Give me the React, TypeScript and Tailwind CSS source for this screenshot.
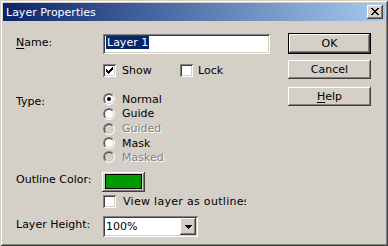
const raised =
  "shadow-[inset_-1px_-1px_#404040,inset_1px_1px_#ffffff,inset_-2px_-2px_#808080,inset_2px_2px_#d4d0c8]";
const sunken =
  "shadow-[inset_1px_1px_#808080,inset_-1px_-1px_#ffffff,inset_2px_2px_#404040,inset_-2px_-2px_#d4d0c8]";

function Checkbox({ checked = false }: { checked?: boolean }) {
  return (
    <span className={`flex h-[13px] w-[13px] shrink-0 items-center justify-center bg-white ${sunken}`}>
      {checked && (
        <svg width="7" height="7" viewBox="0 0 7 7" shapeRendering="crispEdges">
          {[2, 3, 4, 3, 2, 1, 0].map((y, x) => (
            <rect key={x} x={x} y={y} width="1" height="3" fill="#000" />
          ))}
        </svg>
      )}
    </span>
  );
}

function Radio({ checked = false, disabled = false }: { checked?: boolean; disabled?: boolean }) {
  return (
    <span className="flex h-[12px] w-[12px] shrink-0 rounded-full border border-t-[#808080] border-l-[#808080] border-r-white border-b-white">
      <span
        className={`flex flex-1 items-center justify-center rounded-full border border-t-[#404040] border-l-[#404040] border-r-[#d4d0c8] border-b-[#d4d0c8] ${
          disabled ? "bg-[#d4d0c8]" : "bg-white"
        }`}
      >
        {checked && <span className="h-[4px] w-[4px] rounded-full bg-black" />}
      </span>
    </span>
  );
}

function RadioRow({
  label,
  h,
  checked,
  disabled,
}: {
  label: string;
  h: string;
  checked?: boolean;
  disabled?: boolean;
}) {
  return (
    <div className={`flex items-center ${h}`}>
      <Radio checked={checked} disabled={disabled} />
      <span
        className={`ml-[7px] ${
          disabled ? "text-[#808080] [text-shadow:1px_1px_0_#ffffff]" : ""
        }`}
      >
        {label}
      </span>
    </div>
  );
}

function Button({ children, className = "" }: { children: React.ReactNode; className?: string }) {
  return (
    <div className={`flex h-[19px] w-[83px] items-center justify-center bg-[#d4d0c8] ${raised} ${className}`}>
      {children}
    </div>
  );
}

export default function App() {
  return (
    <div className="flex h-[246px] w-[388px] flex-col bg-[#d4d0c8] p-[3px] font-['DejaVu_Sans',sans-serif] text-[11px] leading-[13px] text-black shadow-[inset_1px_1px_#d4d0c8,inset_-1px_-1px_#404040,inset_2px_2px_#ffffff,inset_-2px_-2px_#808080]">
      {/* title bar */}
      <div className="flex h-[18px] shrink-0 items-center justify-between bg-[linear-gradient(to_right,#0a246a,#a6caf0)] pl-[3px] pr-[2px]">
        <span className="text-white">Layer Properties</span>
        <div className={`flex h-[14px] w-[16px] items-center justify-center bg-[#d4d0c8] ${raised}`}>
          <svg width="8" height="7" viewBox="0 0 8 7" shapeRendering="crispEdges" className="-mt-[1px] -ml-[1px]">
            <rect x="0" y="0" width="2" height="1" />
            <rect x="6" y="0" width="2" height="1" />
            <rect x="1" y="1" width="2" height="1" />
            <rect x="5" y="1" width="2" height="1" />
            <rect x="2" y="2" width="4" height="1" />
            <rect x="3" y="3" width="2" height="1" />
            <rect x="2" y="4" width="4" height="1" />
            <rect x="1" y="5" width="2" height="1" />
            <rect x="5" y="5" width="2" height="1" />
            <rect x="0" y="6" width="2" height="1" />
            <rect x="6" y="6" width="2" height="1" />
          </svg>
        </div>
      </div>

      <div className="flex flex-1 pl-[13px] pr-[14px] pt-[12px]">
        {/* fields */}
        <div className="flex flex-1 flex-col pt-[1px]">
          <div className="flex h-[20px]">
            <div className="w-[87px] pt-[2px]">
              <span className="underline underline-offset-2">N</span>ame:
            </div>
            <div className={`h-[20px] w-[167px] bg-white pl-[3px] pt-[2px] ${sunken}`}>
              <span className="inline-block bg-[#0a246a] px-[1px] text-white">Layer 1</span>
            </div>
          </div>

          <div className="mt-[10px] flex h-[13px] items-center pl-[87px]">
            <Checkbox checked />
            <span className="ml-[6px] w-[58px]">Show</span>
            <Checkbox />
            <span className="ml-[5px]">Lock</span>
          </div>

          <div className="mt-[15px] flex">
            <div className="w-[87px] pt-[3px]">Type:</div>
            <div className="flex flex-col">
              <RadioRow label="Normal" h="h-[14px]" checked />
              <RadioRow label="Guide" h="h-[15px]" />
              <RadioRow label="Guided" h="h-[15px]" disabled />
              <RadioRow label="Mask" h="h-[14px]" />
              <RadioRow label="Masked" h="h-[14px]" disabled />
            </div>
          </div>

          <div className="mt-[8px] flex">
            <div className="w-[86px] pt-[1px]">Outline Color:</div>
            <div className={`h-[20px] w-[43px] bg-[#d4d0c8] pl-[3px] pr-[3px] pt-[2px] pb-[3px] ${raised}`}>
              <div className="h-full w-full border border-black bg-[#009900]" />
            </div>
          </div>

          <div className="mt-[3px] flex h-[13px] items-center pl-[87px]">
            <Checkbox />
            <span className="ml-[7px] w-[123px] overflow-hidden whitespace-nowrap tracking-[0.3px]">
              View layer as outlines
            </span>
          </div>

          <div className="mt-[8px] flex">
            <div className="w-[87px] pt-[2px]">Layer Height:</div>
            <div className={`flex h-[21px] w-[95px] items-stretch justify-between bg-white p-[2px] ${sunken}`}>
              <span className="flex items-center pl-[1px]">100%</span>
              <div className={`flex w-[16px] items-center justify-center bg-[#d4d0c8] ${raised}`}>
                <svg width="7" height="4" viewBox="0 0 7 4" shapeRendering="crispEdges">
                  <rect x="0" y="0" width="7" height="1" />
                  <rect x="1" y="1" width="5" height="1" />
                  <rect x="2" y="2" width="3" height="1" />
                  <rect x="3" y="3" width="1" height="1" />
                </svg>
              </div>
            </div>
          </div>
        </div>

        {/* buttons */}
        <div className="flex w-[83px] flex-col">
          <div className="h-[21px] w-[83px] border border-black">
            <Button className="!h-[19px] !w-[81px]">OK</Button>
          </div>
          <Button className="mt-[6px]">Cancel</Button>
          <Button className="mt-[8px]">
            <span>
              <span className="underline underline-offset-2">H</span>elp
            </span>
          </Button>
        </div>
      </div>
    </div>
  );
}
